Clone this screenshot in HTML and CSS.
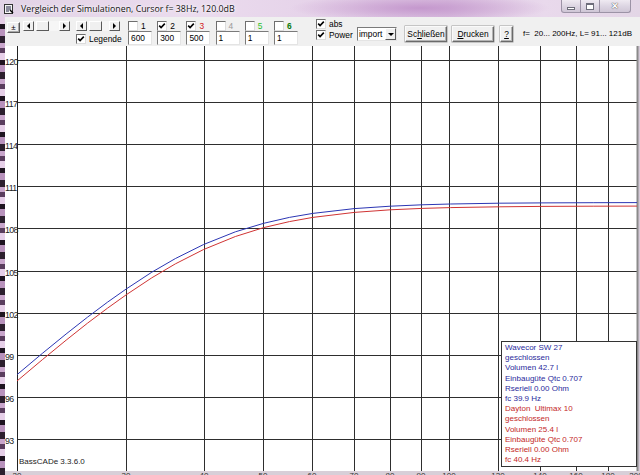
FILE: index.html
```html
<!DOCTYPE html>
<html lang="de">
<head>
<meta charset="utf-8">
<title>Vergleich der Simulationen</title>
<link rel="stylesheet" href="styles.css">
</head>
<body>
<div class="window">
  <div class="titlebar">
    <svg class="appicon" width="10" height="10" viewBox="0 0 10 10">
      <rect x="0.5" y="0.5" width="8" height="9" fill="#f4f4f4" stroke="#333"/>
      <path d="M2 3h5M2 5h5M2 7h3" stroke="#224" stroke-width="1"/>
      <path d="M6 6l3 3" stroke="#000" stroke-width="1.4"/>
    </svg>
    <span class="title">Vergleich der Simulationen, Cursor f= 38Hz, 120.0dB</span>
    <div class="winbtns">
      <span class="wb"><span class="g-min"></span></span>
      <span class="wb"><span class="g-max"></span></span>
      <span class="wb wb-close"><span class="g-close">✕</span></span>
    </div>
  </div>

  <div class="client">
    <div class="toolbar">
      <div class="tb-left">
        <div class="tb-row">
          <span class="rbtn pm">±</span>
          <span class="scroll s1"><span class="sb"><span class="tri-l"></span></span><span class="thumb"></span><span class="track"></span><span class="sb"><span class="tri-r"></span></span></span>
          <span class="scroll s2"><span class="sb"><span class="tri-l"></span></span><span class="thumb"></span><span class="track"></span><span class="sb"><span class="tri-r"></span></span></span>
        </div>
        <label class="chk legende"><span class="box"><svg viewBox="0 0 8 8"><path d="M1.2 3.6 L3.1 5.6 L6.8 1.6"/></svg></span>Legende</label>
      </div>

      <div class="series">
        <label class="chk"><span class="box"></span><span class="c1">1</span></label>
        <label class="chk"><span class="box"><svg viewBox="0 0 8 8"><path d="M1.2 3.6 L3.1 5.6 L6.8 1.6"/></svg></span><span class="c2">2</span></label>
        <label class="chk"><span class="box"><svg viewBox="0 0 8 8"><path d="M1.2 3.6 L3.1 5.6 L6.8 1.6"/></svg></span><span class="c3">3</span></label>
        <label class="chk"><span class="box"></span><span class="c4">4</span></label>
        <label class="chk"><span class="box"></span><span class="c5">5</span></label>
        <label class="chk"><span class="box"></span><span class="c6">6</span></label>
        <span class="field">600</span>
        <span class="field">300</span>
        <span class="field">500</span>
        <span class="field">1</span>
        <span class="field">1</span>
        <span class="field">1</span>
      </div>

      <div class="opts">
        <label class="chk"><span class="box"><svg viewBox="0 0 8 8"><path d="M1.2 3.6 L3.1 5.6 L6.8 1.6"/></svg></span>abs</label>
        <label class="chk"><span class="box"><svg viewBox="0 0 8 8"><path d="M1.2 3.6 L3.1 5.6 L6.8 1.6"/></svg></span>Power</label>
      </div>

      <div class="combo"><span class="ctext">import</span><span class="cbtn"><span class="tri-d"></span></span></div>

      <span class="rbtn push b-close">Sc<u>h</u>ließen</span>
      <span class="rbtn push b-print"><u>D</u>rucken</span>
      <span class="rbtn push b-help"><u>?</u></span>

      <span class="info">f=&nbsp; 20... 200Hz, L= 91... 121dB</span>
    </div>

    <div class="chart">
      <svg class="plot" width="635" height="429" viewBox="5 46 635 429">
        <rect x="5" y="46" width="632" height="425" fill="#fff"/>
        <rect x="5" y="471" width="635" height="4" class="bottomstrip"/>
        <g class="grid">
          <path d="M17 60.5H637M17 102.5H637M17 144.5H637M17 186.5H637M17 228.5H637M17 271.5H637M17 313.5H637M17 355.5H637M17 397.5H637M17 439.5H637"/>
          <path d="M126.5 46V471M204.5 46V471M263.5 46V471M312.5 46V471M354.5 46V471M390.5 46V471M421.5 46V471M449.5 46V471M498.5 46V471M540.5 46V471M576.5 46V471M608.5 46V471"/>
          <path class="axis" d="M17.5 46V471"/>
        </g>
        <path class="rightedge" d="M637.5 46V471"/>
        <g class="ylab">
          <text x="5" y="64.5">120</text>
          <text x="5" y="106.5">117</text>
          <text x="5" y="148.5">114</text>
          <text x="5" y="190.5">111</text>
          <text x="5" y="232.5">108</text>
          <text x="5" y="275.5">105</text>
          <text x="5" y="317.5">102</text>
          <text x="5" y="359.5">99</text>
          <text x="5" y="401.5">96</text>
          <text x="5" y="443.5">93</text>
        </g>
        <polyline class="c-blue" points="17,374.7 42.7,353.1 66.1,334.0 87.6,317.1 107.6,302.1 126.2,289.0 151.8,272.2 175.3,258.6 203.6,244.5 235.4,231.8 263.7,223.3 289.4,217.4 312.8,213.4 354.3,208.6 390.3,206.2 422,204.8 450.4,204.0 499.5,203.2 541,202.9 593.2,202.7 637,202.6"/>
        <polyline class="c-red" points="17,381.0 42.7,359.4 66.1,340.2 87.6,323.1 107.6,308.1 126.2,294.8 151.8,277.8 175.3,263.9 203.6,249.5 235.4,236.5 263.7,227.6 289.4,221.6 312.8,217.4 354.3,212.4 390.3,209.8 422,208.4 450.4,207.6 499.5,206.8 541,206.4 593.2,206.2 637,206.1"/>
        <text class="version" x="19" y="464">BassCADe 3.3.6.0</text>
        <g class="xlab">
          <text x="17" y="478">20</text>
          <text x="126" y="478">30</text>
          <text x="204" y="478">40</text>
          <text x="263" y="478">50</text>
          <text x="312" y="478">60</text>
          <text x="354" y="478">70</text>
          <text x="390" y="478">80</text>
          <text x="421" y="478">90</text>
          <text x="449" y="478">100</text>
          <text x="498" y="478">120</text>
          <text x="540" y="478">140</text>
          <text x="576" y="478">160</text>
          <text x="608" y="478">180</text>
          <text x="636" y="478">200</text>
        </g>
      </svg>

      <div class="legend">
        <div class="lg-blue">
          <div>Wavecor SW 27</div>
          <div>geschlossen</div>
          <div>Volumen 42.7 l</div>
          <div>Einbaugüte Qtc 0.707</div>
          <div>Rseriell 0.00 Ohm</div>
          <div>fc 39.9 Hz</div>
        </div>
        <div class="lg-red">
          <div>Dayton&nbsp; Ultimax 10</div>
          <div>geschlossen</div>
          <div>Volumen 25.4 l</div>
          <div>Einbaugüte Qtc 0.707</div>
          <div>Rseriell 0.00 Ohm</div>
          <div>fc 40.4 Hz</div>
        </div>
      </div>
    </div>
  </div>
</div>
</body>
</html>
```

FILE: styles.css
```css
* { box-sizing: border-box; margin: 0; padding: 0; }

html, body {
  width: 640px;
  height: 475px;
  overflow: hidden;
}

body {
  font-family: "Liberation Sans", Arial, sans-serif;
  font-size: 8px;
  color: #000;
  background: #d6cad8;
}

.window {
  display: flex;
  flex-direction: column;
  width: 640px;
  height: 475px;
  background:
    repeating-linear-gradient(180deg, #2c1f2e 0 7px, #c9a6cc 7px 12px, #5a3d5e 12px 17px, #e6cfe8 17px 24px, #1e1420 24px 29px, #b892bc 29px 36px) 0 0 / 5px 100% no-repeat,
    #d6cad8;
}

/* ---------- title bar ---------- */
.titlebar {
  position: relative;
  height: 17px;
  display: flex;
  align-items: center;
  padding-left: 4px;
  background:
    radial-gradient(ellipse 130px 14px at 420px 8px, rgba(190, 140, 200, 0.8), rgba(190, 140, 200, 0) 100%),
    linear-gradient(90deg, #e2d3e6 0%, #ebdcee 30%, #e4d0e8 55%, #dcc3e1 70%, #e9d9ec 85%, #e3d6e6 100%);
}

.appicon { display: block; margin-right: 7px; }

.title {
  font-family: "Open Sans", "Noto Sans", sans-serif;
  font-size: 8.8px;
  color: #111;
  text-shadow: 0 0 4px #fff, 0 0 2px #fff;
  white-space: nowrap;
}

.winbtns {
  position: absolute;
  right: 9px;
  top: 0;
  display: flex;
}

.wb {
  height: 13px;
  width: 19px;
  display: flex;
  align-items: center;
  justify-content: center;
  border: 1px solid #9c93a6;
  border-top: none;
  background: linear-gradient(180deg, #efeaf2 0%, #ddd6e3 50%, #cfc6d6 100%);
}
.wb + .wb { border-left: none; }
.wb:first-child { border-bottom-left-radius: 3px; width: 20px; }
.wb-close { width: 31px; border-bottom-right-radius: 3px; }

.g-min { width: 8px; height: 3px; border: 1px solid #6d6d7a; background: #fff; margin-top: 4px; }
.g-max { width: 8px; height: 7px; border: 1px solid #6d6d7a; border-top-width: 2px; background: #fff; }
.g-close { font-size: 9px; line-height: 9px; color: #fff; font-weight: bold; text-shadow: 0 0 1px #555, 0 0 1px #555; }

/* ---------- client ---------- */
.client {
  flex: 1;
  display: flex;
  flex-direction: column;
  margin-left: 5px;
}

.toolbar {
  height: 29px;
  flex: none;
  display: flex;
  align-items: flex-start;
  padding: 4px 0 0 2px;
  background: #f0f0f0;
}

.tb-left {
  width: 121px;
  display: flex;
  flex-direction: column;
}

.tb-row {
  display: flex;
  align-items: flex-start;
}

.rbtn {
  display: inline-flex;
  align-items: center;
  justify-content: center;
  background: #f0f0f0;
  border: 1px solid;
  border-color: #fff #5a5a5a #5a5a5a #fff;
  box-shadow: inset -1px -1px 0 #a8a8a8;
  white-space: nowrap;
}

.pm {
  width: 13px;
  height: 11px;
  margin-top: 1px;
  font-size: 8px;
  line-height: 1;
}

.scroll {
  display: flex;
  height: 10px;
  background: #f6f6f6;
}
.s1 { width: 47px; margin-left: 3px; }
.s2 { width: 44px; margin-left: 6px; }

.sb, .thumb {
  width: 11px;
  height: 10px;
  display: flex;
  align-items: center;
  justify-content: center;
  background: #f0f0f0;
  border: 1px solid;
  border-color: #fff #5a5a5a #5a5a5a #fff;
}
.thumb { width: 13px; margin-left: 2px; }
.track { flex: 1; }

.tri-l { width: 0; height: 0; border-top: 3px solid transparent; border-bottom: 3px solid transparent; border-right: 3px solid #000; }
.tri-r { width: 0; height: 0; border-top: 3px solid transparent; border-bottom: 3px solid transparent; border-left: 3px solid #000; }
.tri-d { width: 0; height: 0; border-left: 3px solid transparent; border-right: 3px solid transparent; border-top: 3px solid #000; }

.chk {
  display: flex;
  align-items: center;
  height: 10px;
  white-space: nowrap;
  line-height: 10px;
  font-size: 8.4px;
}

.box {
  width: 10px;
  height: 10px;
  flex: none;
  margin-right: 3px;
  background: #fff;
  border: 1px solid;
  border-color: #6e6e6e #dcdcdc #dcdcdc #6e6e6e;
  display: flex;
  align-items: center;
  justify-content: center;
}
.box svg { width: 8px; height: 8px; display: block; }
.box path { fill: none; stroke: #000; stroke-width: 1.6; }

.legende {
  margin: 1px 0 0 69px;
}

.series {
  width: 175px;
  display: grid;
  grid-template-columns: repeat(6, 29.2px);
  grid-template-rows: 10px 14px;
}

.c3 { color: #d02020; }
.c4 { color: #9a9a9a; }
.c5 { color: #2cc02c; }
.c6 { color: #0a7a0a; font-weight: bold; }

.field {
  width: 24px;
  height: 14px;
  padding: 1px 0 0 2px;
  background: #fff;
  border: 1px solid;
  border-color: #7a7a7a #e4e4e4 #e4e4e4 #7a7a7a;
  line-height: 11px;
  font-size: 8.4px;
}

.opts {
  width: 36px;
  margin: -2px 0 0 13px;
  display: flex;
  flex-direction: column;
  gap: 1px;
}

.combo {
  width: 40px;
  height: 14px;
  margin: 6px 0 0 5px;
  display: flex;
  align-items: stretch;
  background: #fff;
  border: 1px solid;
  border-color: #7a7a7a #e4e4e4 #e4e4e4 #7a7a7a;
}
.ctext { flex: 1; padding-left: 1px; line-height: 12px; font-size: 8.4px; }
.cbtn {
  width: 11px;
  display: flex;
  align-items: center;
  justify-content: center;
  background: #f0f0f0;
  border: 1px solid;
  border-color: #fff #5a5a5a #5a5a5a #fff;
}

.push {
  height: 16px;
  margin-top: 5px;
  font-size: 8.4px;
  border-color: #fafafa #6a6a6a #6a6a6a #fafafa;
  box-shadow: inset -1px -1px 0 #b4b4b4, 0 0 0 0.5px #9a9a9a;
}
.b-close { width: 42px; margin-left: 8px; }
.b-print { width: 42px; margin-left: 5px; }
.b-help { width: 13px; margin-left: 6px; }

.info {
  margin: 8px 0 0 10px;
  white-space: nowrap;
  line-height: 10px;
}

/* ---------- chart ---------- */
.chart {
  position: relative;
  flex: 1;
}

.plot { display: block; }

.bottomstrip { fill: #d8cfd8; }

.grid path { fill: none; stroke: #2e2e2e; stroke-width: 1; }
.grid .axis { stroke: #222; }
.rightedge { stroke: #8a8a8a; stroke-width: 2; }

.ylab text, .xlab text, .version {
  font-family: "Liberation Sans", Arial, sans-serif;
  font-size: 8px;
  fill: #222;
}
.ylab text { font-size: 8.8px; letter-spacing: -0.6px; }
.xlab text { text-anchor: middle; fill: #333; }
.version { font-size: 8px; }

.c-blue, .c-red { fill: none; stroke-width: 1; }
.c-blue { stroke: #2c36b4; }
.c-red { stroke: #d03434; }

.legend {
  position: absolute;
  left: 496px;
  top: 295px;
  width: 136px;
  height: 126px;
  padding: 1px 0 0 3px;
  background: #fff;
  border: 1px solid #333;
  font-size: 8px;
  line-height: 10.2px;
  white-space: nowrap;
}
.lg-blue { color: #2a2a9c; }
.lg-red { color: #c42828; }
```
